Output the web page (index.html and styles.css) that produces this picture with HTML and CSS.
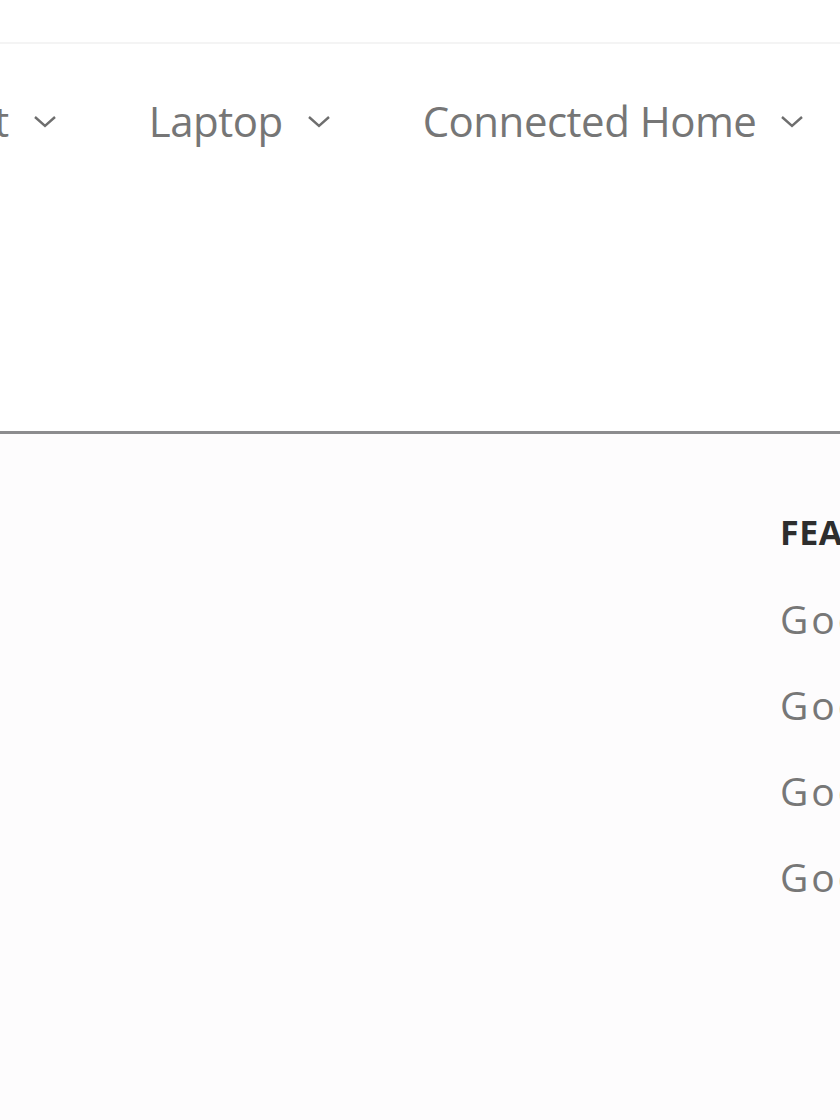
FILE: index.html
```html
<!DOCTYPE html>
<html>
<head>
<meta charset="utf-8">
<link rel="stylesheet" href="styles.css">
</head>
<body>
<div class="page">
  <div class="topbar"></div>
  <nav class="nav">
    <div class="nav-item"><span>Product</span><svg class="chev" viewBox="0 0 24 14"><path d="M2 2 L12 11 L22 2"/></svg></div>
    <div class="nav-item"><span>Laptop</span><svg class="chev" viewBox="0 0 24 14"><path d="M2 2 L12 11 L22 2"/></svg></div>
    <div class="nav-item"><span>Connected Home</span><svg class="chev" viewBox="0 0 24 14"><path d="M2 2 L12 11 L22 2"/></svg></div>
    <div class="nav-item"><span>Accessories</span><svg class="chev" viewBox="0 0 24 14"><path d="M2 2 L12 11 L22 2"/></svg></div>
  </nav>
  <div class="hero"></div>
  <div class="menu">
    <div class="menu-left"></div>
    <div class="menu-col">
      <div class="menu-title">FEATURED</div>
      <ul class="menu-list">
        <li>Google Pixel 8</li>
        <li>Google Pixel 8 Pro</li>
        <li>Google Pixel Watch 2</li>
        <li>Google Pixel Buds Pro</li>
      </ul>
    </div>
  </div>
</div>
</body>
</html>
```
FILE: styles.css
```css
html, body {
  margin: 0;
  padding: 0;
  background: #fdfcfd;
  overflow: hidden;
}
.page {
  width: 840px;
  height: 1120px;
  overflow: hidden;
  font-family: "Open Sans", "DejaVu Sans", sans-serif;
}
.topbar {
  height: 42px;
  background: #ffffff;
  border-bottom: 2px solid #f4f4f4;
}
.nav {
  display: flex;
  align-items: center;
  height: 152px;
  background: #ffffff;
  margin-left: -142px;
  gap: 92px;
  white-space: nowrap;
}
.nav-item {
  display: flex;
  align-items: center;
  gap: 24px;
  font-size: 42px;
  color: #767676;
  letter-spacing: -0.5px;
  flex: none;
}
.chev {
  width: 24px;
  height: 14px;
  fill: none;
  stroke: #6e6e6e;
  stroke-width: 2.4;
  margin-top: 4px;
}
.hero {
  height: 235px;
  background: #ffffff;
  border-bottom: 3px solid #8c8c8e;
}
.menu {
  display: flex;
  padding-top: 78px;
}
.menu-left {
  width: 780px;
  flex: none;
}
.menu-col {
  flex: none;
  white-space: nowrap;
}
.menu-title {
  font-size: 34px;
  font-weight: 700;
  color: #2e2e2e;
  letter-spacing: 0.5px;
  line-height: 40px;
}
.menu-list {
  list-style: none;
  margin: 0;
  padding: 0;
  margin-top: 44px;
  display: flex;
  flex-direction: column;
  gap: 40px;
}
.menu-list li {
  font-size: 39px;
  line-height: 46px;
  color: #777777;
  letter-spacing: 3px;
}
```
